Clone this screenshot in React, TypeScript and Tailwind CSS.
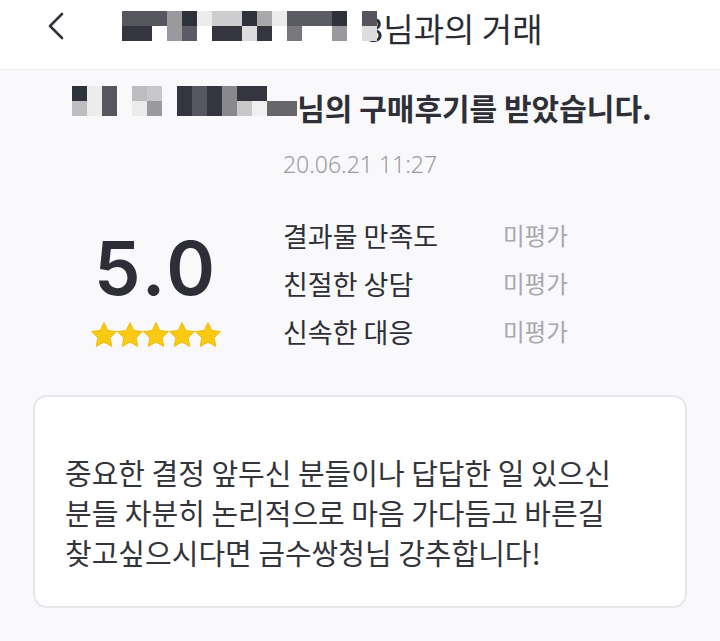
const headTop = ['#56565e', '#56565e', '#56565e', '#9a9a9e', '#2f313b', '#ececec', '#cdcdcf', '#cdcdcf', '#2f313b', '#a9a9ac', '#ececec', '#5b5b63', '#5b5b63', '#5b5b63', '#2f313b', '#ffffff', '#55555e'];
const headBottom = ['#34353f', '#34353f', '#ffffff', '#9a9a9e', '#5b5b63', '#ffffff', '#34353f', '#34353f', '#dcdcde', '#34353f', '#ffffff', '#77777c', '#ffffff', '#ffffff', '#9a9a9e', '#ffffff', '#dddddf'];

const nameTop = ['#2f313b', '#ececec', '#56565e', 'transparent', '#bdbdc0', '#c8c8ca', 'transparent', '#34353f', '#56565e', '#34353f', '#88888d', '#34353f', '#34353f', 'transparent', 'transparent'];
const nameBottom = ['#bdbdc0', '#ececec', '#56565e', 'transparent', '#ececec', '#9a9a9e', 'transparent', '#34353f', '#56565e', '#34353f', '#88888d', '#c8c8ca', '#f0f0f0', '#66666b', '#66666b'];

const ratings = ['결과물 만족도', '친절한 상담', '신속한 대응'];

// 가려진 닉네임 (모자이크)
const Mosaic = ({ top, bottom, size }: { top: string[]; bottom: string[]; size: number }) => (
  <div className="relative z-10 flex flex-col shrink-0">
    {[top, bottom].map((row, r) => (
      <div key={r} className="flex">
        {row.map((c, i) => (
          <div key={i} style={{ backgroundColor: c, width: size, height: size }} />
        ))}
      </div>
    ))}
  </div>
);

const Star = () => (
  <svg width="26" height="26" viewBox="2 2 20 20">
    <path
      d="M12 2.4l2.95 6.1 6.75.85-4.95 4.7 1.28 6.75L12 17.5l-6.03 3.3 1.28-6.75-4.95-4.7 6.75-.85z"
      fill="#f9c913"
      stroke="#eeb90a"
      strokeWidth="0.7"
      strokeLinejoin="round"
    />
  </svg>
);

export default function App() {
  return (
    <div className="w-[720px] h-[641px] overflow-hidden bg-[#f9f9fb] font-['Noto_Sans_CJK_KR',sans-serif] text-[#2e2f37]">
      {/* 상단 헤더 */}
      <header className="h-[70px] bg-white border-b border-[#eeeef1]">
        <div className="flex items-center h-[52px]">
          <button className="ml-[44px] w-[24px] h-[30px] flex items-center justify-center">
            <svg width="20" height="28" viewBox="0 0 20 28" fill="none" stroke="#33343b" strokeWidth="2.6" strokeLinecap="round" strokeLinejoin="round">
              <path d="M16 2L4 14l12 12" />
            </svg>
          </button>
          <div className="ml-[54px] flex items-center">
            <Mosaic top={headTop} bottom={headBottom} size={15} />
            <span className="text-[33px] leading-[40px] text-[#2b2c33] -ml-[12px] mt-[4px]">3님과의 거래</span>
          </div>
        </div>
      </header>

      {/* 후기 제목 */}
      <div className="mt-[17px] h-[40px] flex justify-center items-center">
        <div className="flex items-center ml-[4px]">
          <div className="-mt-[12px]">
            <Mosaic top={nameTop} bottom={nameBottom} size={15} />
          </div>
          <span className="text-[30px] leading-[40px] font-bold">님의 구매후기를 받았습니다.</span>
        </div>
      </div>
      <p className="mt-[22px] text-center text-[23px] leading-[30px] text-[#9b9ba0] font-['Noto_Sans',sans-serif] font-light">
        20.06.21 11:27
      </p>

      {/* 평점 */}
      <section className="mt-[33px] flex">
        <div className="w-[160px] ml-[76px] flex flex-col items-center pt-[20px]">
          <span className="text-[74px] leading-[73px] font-semibold font-['Inter',sans-serif] tracking-[3px] text-[#2d2e36]">
            5.0
          </span>
          <div className="mt-[17px] flex">
            {[0, 1, 2, 3, 4].map((i) => (
              <Star key={i} />
            ))}
          </div>
        </div>
        <div className="ml-[47px] flex flex-col">
          {ratings.map((r) => (
            <div key={r} className="h-[48px] flex items-center">
              <span className="w-[220px] text-[27px] text-[#2e2f37]">{r}</span>
              <span className="text-[23.5px] text-[#a8a8ad]">미평가</span>
            </div>
          ))}
        </div>
      </section>

      {/* 후기 내용 */}
      <div className="mt-[39px] mx-[33px] bg-white border-2 border-[#e7e7eb] rounded-[14px] pt-[55px] pb-[34px] pl-[30px]">
        <p className="text-[29px] leading-[40px] text-[#34353b]">
          중요한 결정 앞두신 분들이나 답답한 일 있으신
          <br />
          분들 차분히 논리적으로 마음 가다듬고 바른길
          <br />
          찾고싶으시다면 금수쌍청님 강추합니다!
        </p>
      </div>
    </div>
  );
}
